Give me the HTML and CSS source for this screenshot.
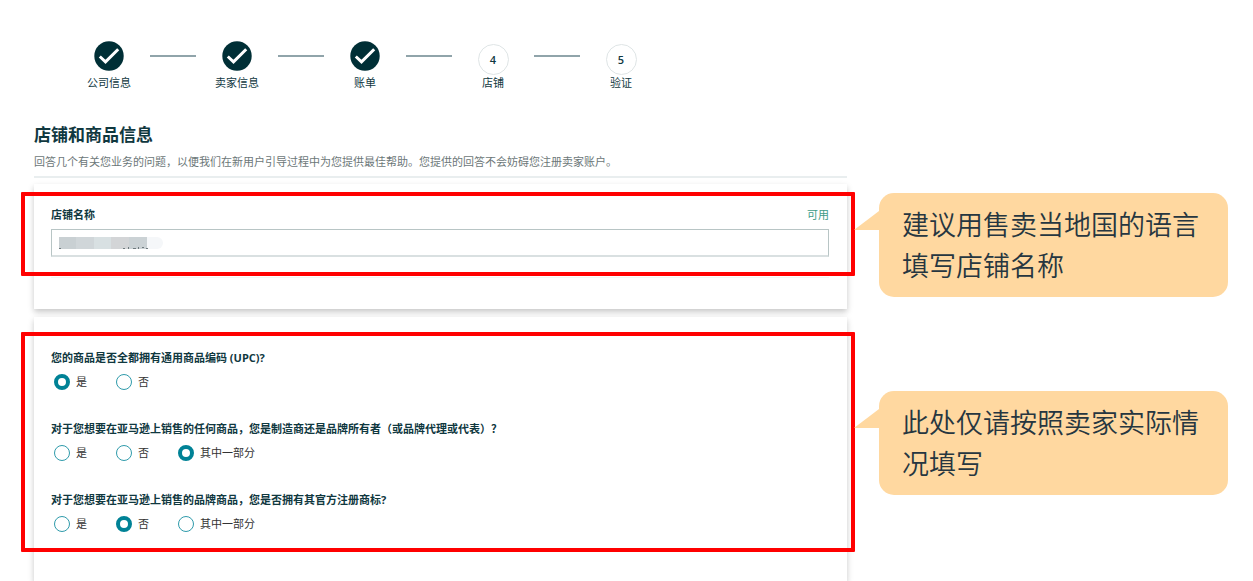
FILE: index.html
```html
<!DOCTYPE html>
<html lang="zh-CN">
<head>
<meta charset="utf-8">
<meta name="viewport" content="width=device-width, initial-scale=1">
<title>店铺和商品信息</title>
<link rel="stylesheet" href="styles.css">
</head>
<body>
<main class="page">
  <header class="intro">
    <ol class="stepper">
      <li class="step step-done">
        <svg class="step-icon" viewBox="0 0 30 30" aria-hidden="true"><circle cx="15" cy="15" r="14.7" fill="#002f36"/><path d="M5.8 15.5 11.5 20.8 24.2 8.3" fill="none" stroke="#fff" stroke-width="3"/></svg>
        <span class="step-label">公司信息</span>
      </li>
      <li class="step-line" aria-hidden="true"></li>
      <li class="step step-done">
        <svg class="step-icon" viewBox="0 0 30 30" aria-hidden="true"><circle cx="15" cy="15" r="14.7" fill="#002f36"/><path d="M5.8 15.5 11.5 20.8 24.2 8.3" fill="none" stroke="#fff" stroke-width="3"/></svg>
        <span class="step-label">卖家信息</span>
      </li>
      <li class="step-line" aria-hidden="true"></li>
      <li class="step step-done">
        <svg class="step-icon" viewBox="0 0 30 30" aria-hidden="true"><circle cx="15" cy="15" r="14.7" fill="#002f36"/><path d="M5.8 15.5 11.5 20.8 24.2 8.3" fill="none" stroke="#fff" stroke-width="3"/></svg>
        <span class="step-label">账单</span>
      </li>
      <li class="step-line" aria-hidden="true"></li>
      <li class="step">
        <span class="step-number">4</span>
        <span class="step-label">店铺</span>
      </li>
      <li class="step-line" aria-hidden="true"></li>
      <li class="step">
        <span class="step-number">5</span>
        <span class="step-label">验证</span>
      </li>
    </ol>
    <h1 class="title">店铺和商品信息</h1>
    <p class="subtitle">回答几个有关您业务的问题，以便我们在新用户引导过程中为您提供最佳帮助。您提供的回答不会妨碍您注册卖家账户。</p>
  </header>

  <section class="card card-store">
    <div class="frame frame-store">
      <div class="field-head">
        <label class="field-label" for="store-name">店铺名称</label>
        <span class="available">可用</span>
      </div>
      <div class="field">
        <input class="field-input" id="store-name" type="text">
        <svg class="mask" viewBox="0 0 104 13" aria-hidden="true"><rect x="74" width="30" height="12" rx="6" fill="#f5f7f9"/><path fill="#c9d0d3" d="M0 0h17v12H0z"/><path fill="#d0d6d9" d="M17 0h18v12H17z"/><path fill="#d8e0e2" d="M35 0h17v12H35z"/><path fill="#d3d5d7" d="M52 0h18v12H52z"/><path fill="#cbd2d5" d="M70 0h18v12H70z"/><path fill="#6f7a7e" d="M0 11h2v1H0zM64 11h2v1h-2zM69 10h1v2h-1zM74 11h3v1h-3zM79 10h1v2h-1zM83 10h2v1h-2zM87 11h2v1h-2z"/></svg>
      </div>
    </div>
    <hr class="rule">
  </section>
  <aside class="callout callout-store">建议用售卖当地国的语言填写店铺名称</aside>

  <section class="card card-questions">
    <div class="frame frame-questions">
      <fieldset class="question">
        <legend class="question-title">您的商品是否全都拥有通用商品编码 (UPC)?</legend>
        <div class="options">
          <label class="option"><input class="radio" type="radio" name="upc" checked>是</label>
          <label class="option"><input class="radio" type="radio" name="upc">否</label>
        </div>
      </fieldset>
      <fieldset class="question">
        <legend class="question-title">对于您想要在亚马逊上销售的任何商品，您是制造商还是品牌所有者（或品牌代理或代表）？</legend>
        <div class="options">
          <label class="option"><input class="radio" type="radio" name="owner">是</label>
          <label class="option"><input class="radio" type="radio" name="owner">否</label>
          <label class="option"><input class="radio" type="radio" name="owner" checked>其中一部分</label>
        </div>
      </fieldset>
      <fieldset class="question">
        <legend class="question-title">对于您想要在亚马逊上销售的品牌商品，您是否拥有其官方注册商标?</legend>
        <div class="options">
          <label class="option"><input class="radio" type="radio" name="trademark">是</label>
          <label class="option"><input class="radio" type="radio" name="trademark" checked>否</label>
          <label class="option"><input class="radio" type="radio" name="trademark">其中一部分</label>
        </div>
      </fieldset>
    </div>
  </section>
  <aside class="callout callout-questions">此处仅请按照卖家实际情况填写</aside>
</main>
</body>
</html>
```
FILE: styles.css
```css
* {
  box-sizing: border-box;
}

body {
  margin: 0;
  background: #fff;
  color: #10383f;
  font: 11px/16px "Open Sans", "Noto Sans CJK SC", sans-serif;
}

.page {
  display: grid;
  grid-template-columns: minmax(0, 1fr) 349px;
  grid-template-rows: auto auto 1fr;
  column-gap: 32px;
  min-height: 100vh;
  padding: 41px 25px 0 34px;
  overflow: hidden;
}

.intro {
  grid-column: 1;
  margin-bottom: 6px;
  border-bottom: 2px solid #e9eeef;
}

/* Stepper */
.stepper {
  display: flex;
  align-items: flex-end;
  margin: 0 0 32px;
  padding: 0 34px;
  list-style: none;
}

.step {
  display: flex;
  flex-direction: column;
  align-items: center;
  width: 82px;
}

.step-done {
  gap: 4px;
}

.step-icon {
  width: 30px;
  height: 30px;
}

.step-number {
  display: grid;
  place-items: center;
  width: 31px;
  height: 31px;
  border: 1px solid #dfe5e6;
  border-radius: 50%;
  font-weight: 600;
}

.step-line {
  align-self: flex-start;
  width: 46px;
  height: 2px;
  margin-top: 14px;
  background: #90a4aa;
}

.title {
  margin: 0 0 7px;
  font-size: 17px;
  line-height: 24px;
  font-weight: 700;
}

.subtitle {
  margin: 0 0 6px;
  color: #6c7778;
}

/* Cards */
.card {
  grid-column: 1;
  background: #fff;
  box-shadow: 0 3px 6px rgba(0, 0, 0, 0.22);
}

.card-store {
  padding: 8px 0 31px;
}

.card-questions {
  margin-top: 8px;
  padding-top: 15px;
}

.frame {
  margin: 0 -8px 0 -13px;
  border: 4px solid #f00;
  border-radius: 1px;
}

.frame-store {
  padding: 11px 22px 15px 26px;
}

.frame-questions {
  display: grid;
  gap: 30px;
  padding: 14px 22px 15px 26px;
}

.rule {
  height: 1px;
  margin: 1px 18px 0 17px;
  border: 0;
  background: #f4f5f5;
}

.field-head {
  display: flex;
  justify-content: space-between;
  margin-bottom: 6px;
}

.field-label {
  font-weight: 700;
}

.available {
  color: #3d9c87;
}

.field {
  position: relative;
}

.field-input {
  display: block;
  width: 100%;
  height: 28px;
  padding: 0 8px;
  border: 1px solid #b8c5c5;
  border-bottom: 2px solid #d9e0e1;
  background: #fff;
  font: inherit;
  color: inherit;
}

/* Mosaic that hides the entered store name */
.mask {
  position: absolute;
  top: 8px;
  left: 8px;
  width: 104px;
  height: 13px;
  pointer-events: none;
}

/* Questions */
.question {
  min-width: 0;
  margin: 0;
  padding: 0;
  border: 0;
}

.question-title {
  margin-bottom: 7px;
  padding: 0;
  font-weight: 700;
}

.options {
  display: grid;
  grid-template-columns: 62px 62px auto;
  margin-left: 3px;
}

.option {
  display: flex;
  align-items: center;
  gap: 6px;
  height: 18px;
  color: #333;
}

.radio {
  appearance: none;
  width: 16px;
  height: 16px;
  margin: 0;
  border: 1px solid #2f9bab;
  border-radius: 50%;
  background: #fff;
}

.radio:checked {
  border: 4px solid #008296;
}

/* Callouts */
.callout {
  position: relative;
  grid-column: 2;
  align-self: start;
  padding: 11px 23px;
  border-radius: 15px;
  background: #ffd8a0;
  color: #263640;
  font-size: 27px;
  line-height: 41px;
  font-weight: 350;
}

.callout::before {
  content: "";
  position: absolute;
  top: 18px;
  left: -25px;
  width: 25px;
  height: 19px;
  background: inherit;
  clip-path: polygon(100% 0, 100% 100%, 0 100%);
}

.callout-store {
  margin-top: 9px;
}

.callout-questions {
  margin-top: 82px;
}
```
